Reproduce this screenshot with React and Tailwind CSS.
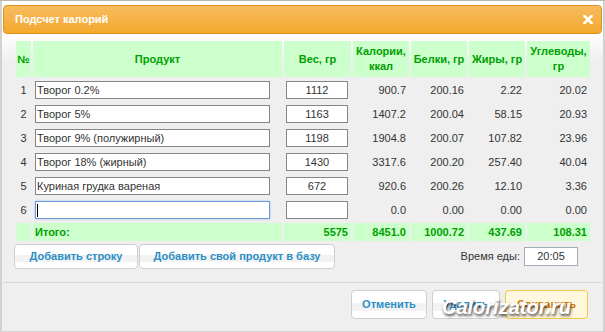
import React from 'react';

const rows = [
  { n: 1, name: 'Творог 0.2%', w: '1112', kcal: '900.7', p: '200.16', f: '2.22', c: '20.02' },
  { n: 2, name: 'Творог 5%', w: '1163', kcal: '1407.2', p: '200.04', f: '58.15', c: '20.93' },
  { n: 3, name: 'Творог 9% (полужирный)', w: '1198', kcal: '1904.8', p: '200.07', f: '107.82', c: '23.96' },
  { n: 4, name: 'Творог 18% (жирный)', w: '1430', kcal: '3317.6', p: '200.20', f: '257.40', c: '40.04' },
  { n: 5, name: 'Куриная грудка вареная', w: '672', kcal: '920.6', p: '200.26', f: '12.10', c: '3.36' },
  { n: 6, name: '', w: '', kcal: '0.0', p: '0.00', f: '0.00', c: '0.00', active: true },
];

function Head({ children }) {
  return (
    <th className="bg-[#ccffcc] text-[#00a000] font-bold text-[11px] leading-[15px] text-center align-middle p-0">
      {children}
    </th>
  );
}

function Btn({ children, className = '' }) {
  return (
    <button
      className={`rounded-[4px] border border-[#cfcfcf] bg-[linear-gradient(#fff_0,#fff_45%,#f2f2f2_45%,#f2f2f2_75%,#fff_75%)] text-[#2a8fc6] font-bold text-[11px] ${className}`}
    >
      {children}
    </button>
  );
}

export default function App() {
  return (
    <div className="relative w-[605px] h-[332px] overflow-hidden bg-white border-t border-[#bdb6ae] font-['Liberation_Sans',Arial,sans-serif] text-[11px] text-[#333]">
      <div className="h-full flex flex-col border-l-2 border-r-2 border-b border-[#d2d2d2] px-[1px] bg-[linear-gradient(#ffffff_0,#fdfdfd_36px,#efefef_60px,#efefef_100%)]">
        {/* title bar */}
        <div className="mt-[4px] h-[29px] flex items-center justify-between rounded-[4px] border border-[#e2921c] bg-gradient-to-b from-[#f7bc5c] to-[#f4a82b] pl-[11px] pr-[8px]">
          <span className="text-white font-bold text-[11px]">Подсчет калорий</span>
          <svg width="10" height="9" viewBox="0 0 10 9">
            <path d="M1.5 1 L8.5 8 M8.5 1 L1.5 8" stroke="#fff" strokeWidth="2.6" strokeLinecap="square" />
          </svg>
        </div>

        {/* table */}
        <div className="pl-[11px] mt-[5px]">
          <table className="table-fixed w-[578px] border-separate border-spacing-[2px]">
            <colgroup>
              <col className="w-[15px]" />
              <col className="w-[249px]" />
              <col className="w-[67px]" />
              <col className="w-[56px]" />
              <col className="w-[56px]" />
              <col className="w-[56px]" />
              <col className="w-[63px]" />
            </colgroup>
            <thead>
              <tr className="h-[36px]">
                <Head>№</Head>
                <Head>Продукт</Head>
                <Head>Вес, гр</Head>
                <Head>Калории,<br />ккал</Head>
                <Head>Белки, гр</Head>
                <Head>Жиры, гр</Head>
                <Head>Углеводы,<br />гр</Head>
              </tr>
            </thead>
            <tbody>
              {rows.map((r) => (
                <tr key={r.n} className="h-[22px]">
                  <td className="p-0 text-center">{r.n}</td>
                  <td className="p-0 pl-[2px]">
                    <div
                      className={`w-[235px] h-[18px] bg-white flex items-center pl-[1px] ${
                        r.active
                          ? 'border border-[#6f97d9] shadow-[0_0_2px_#9cbcf0]'
                          : 'border border-[#858585]'
                      }`}
                    >
                      {r.active ? <span className="w-px h-[13px] bg-black" /> : r.name}
                    </div>
                  </td>
                  <td className="p-0 pl-[2px]">
                    <div className="w-[62px] h-[18px] bg-white border border-[#858585] flex items-center justify-center">
                      {r.w}
                    </div>
                  </td>
                  <td className="p-0 pr-[3px] text-right">{r.kcal}</td>
                  <td className="p-0 pr-[3px] text-right">{r.p}</td>
                  <td className="p-0 pr-[3px] text-right">{r.f}</td>
                  <td className="p-0 pr-[3px] text-right">{r.c}</td>
                </tr>
              ))}
              <tr className="h-[18px] bg-[#ccffcc] text-[#00a000] font-bold">
                <td className="p-0 bg-[#ccffcc]" />
                <td className="p-0 pl-[2px] bg-[#ccffcc]">Итого:</td>
                <td className="p-0 pr-[3px] text-right bg-[#ccffcc]">5575</td>
                <td className="p-0 pr-[3px] text-right bg-[#ccffcc]">8451.0</td>
                <td className="p-0 pr-[3px] text-right bg-[#ccffcc]">1000.72</td>
                <td className="p-0 pr-[3px] text-right bg-[#ccffcc]">437.69</td>
                <td className="p-0 pr-[3px] text-right bg-[#ccffcc]">108.31</td>
              </tr>
            </tbody>
          </table>
        </div>

        {/* add buttons + meal time */}
        <div className="mt-[1px] pl-[11px] pr-[24px] flex items-start">
          <Btn className="w-[124px] h-[25px]">Добавить строку</Btn>
          <Btn className="ml-[1px] w-[196px] h-[25px]">Добавить свой продукт в базу</Btn>
          <div className="ml-auto mt-[3px] flex items-center gap-[4px]">
            <span>Время еды:</span>
            <div className="w-[54px] h-[19px] bg-white border border-[#a3abb8] flex items-center justify-center">
              20:05
            </div>
          </div>
        </div>

        <div className="mt-[13px] border-t border-[#d8d8d8]" />

        {/* footer buttons */}
        <div className="mt-[7px] pr-[14px] flex justify-end gap-[5px]">
          <Btn className="w-[76px] h-[29px]">Отменить</Btn>
          <Btn className="w-[68px] h-[29px]">Удалить</Btn>
          <button className="w-[83px] h-[29px] rounded-[4px] border border-[#f2c745] bg-[#fff8de] text-[#cf7c12] font-bold text-[11px]">
            Сохранить
          </button>
        </div>
      </div>

      {/* watermark */}
      <span className="absolute left-[442px] top-[291px] text-[20px] font-bold italic text-white [text-shadow:1px_2px_3px_rgba(0,0,0,0.75)]">
        Calorizator.ru
      </span>
    </div>
  );
}
